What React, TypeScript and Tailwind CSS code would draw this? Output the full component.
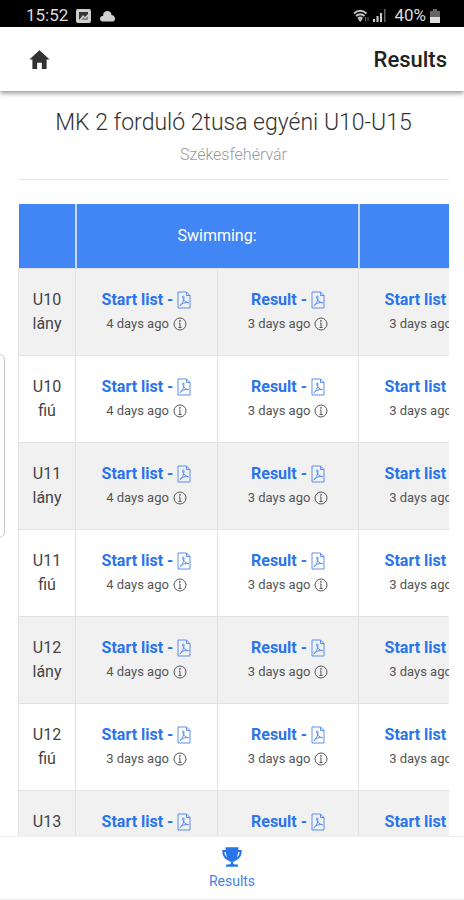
import React from 'react';
import { IoMdHome, IoMdTrophy } from 'react-icons/io';

interface AgeGroup {
  code: string;
  gender: string;
  startList: string;
  result: string;
}

const AGE_GROUPS: AgeGroup[] = [
  { code: 'U10', gender: 'lány', startList: '4 days ago', result: '3 days ago' },
  { code: 'U10', gender: 'fiú', startList: '4 days ago', result: '3 days ago' },
  { code: 'U11', gender: 'lány', startList: '4 days ago', result: '3 days ago' },
  { code: 'U11', gender: 'fiú', startList: '4 days ago', result: '3 days ago' },
  { code: 'U12', gender: 'lány', startList: '4 days ago', result: '3 days ago' },
  { code: 'U12', gender: 'fiú', startList: '3 days ago', result: '3 days ago' },
  { code: 'U13', gender: 'lány', startList: '3 days ago', result: '3 days ago' },
];

const PdfIcon = () => (
  <svg viewBox="0 0 14 18" className="h-[18px] w-[14px] shrink-0 text-[#5b8def]" fill="none" stroke="currentColor" strokeLinejoin="round">
    <path d="M1 1h8.500L13 4.500V17H1z" />
    <path d="M9.500 1v3.500H13" />
    <path d="M2.800 14.800c2-1 4.200-5 4.200-9 0-1.300-1.600-1.300-1.400 0 .4 3 2.900 5.700 6 5.900-3-.6-6.800.4-8.800 3.100z" />
  </svg>
);

const InfoIcon = () => (
  <svg viewBox="0 0 14 14" className="size-[14px] shrink-0" fill="none" stroke="currentColor">
    <circle cx="7" cy="7" r="6" />
    <path d="M6 6h1v4.500M5.500 10.500h3" />
    <circle cx="7" cy="3.800" r=".9" fill="currentColor" stroke="none" />
  </svg>
);

interface DocumentCellProps {
  label: string;
  uploaded: string;
}

const DocumentCell: React.FC<DocumentCellProps> = ({ label, uploaded }) => (
  <td className="border border-[#e0e2e4] p-0 text-center align-middle whitespace-nowrap">
    <a href="#" className="flex h-6 items-center justify-center gap-1 text-base font-bold text-[#2a74ec]">
      {label} - <PdfIcon />
    </a>
    <div className="flex h-6 items-center justify-center gap-1 text-[13px] text-[#555]">
      {uploaded} <InfoIcon />
    </div>
  </td>
);

const StatusBar = () => (
  <div className="flex h-[27px] shrink-0 items-center justify-between bg-black pt-1 pr-6 pl-[26px] text-[17px] text-[#dcdcdc]">
    <div className="flex items-center gap-2">
      <span>15:52</span>
      <svg viewBox="0 0 15 14" className="h-[14px] w-[15px]">
        <rect width="15" height="14" rx="2" fill="#cfcfcf" />
        <path d="M3 11V3h9v2L9 8 7 6 3 11z" fill="#333" />
        <path d="M5 11l2.500-3 2 1.500L12 7v4z" fill="#888" />
      </svg>
      <svg viewBox="0 0 17 12" className="h-3 w-[17px]" fill="#cfcfcf">
        <path d="M3 11.500a3 3 0 0 1-.3-5.600h1.500A4 4 0 0 1 8 1a4.300 4.300 0 0 1 4.500 4 3.400 3.400 0 0 1 1.500 6.500z" />
      </svg>
    </div>
    <div className="flex items-center gap-1">
      <svg viewBox="0 0 16 14" className="h-[14px] w-4" fill="none" stroke="#c4c4c4" strokeWidth="2">
        <path d="M1 4.500c4-3.500 8.500-3.500 12.500 0M3 7c2.700-2.300 5.800-2.300 8.500 0M5 9.500c1.500-1.200 3-1.200 4.500 0" />
        <path d="M7.200 13 5 10h4.500z" fill="#c4c4c4" stroke="none" />
        <path d="M12.500 12V8M15 8v4" stroke="#666" strokeWidth="1" />
      </svg>
      <svg viewBox="0 0 13 13" className="size-[13px]" fill="#cfcfcf">
        <path d="M0 10h2v3H0zM3.500 7h2v6h-2zM7 4h2v9H7z" />
        <path d="M11 0h1.500v13H11z" fill="#666" />
      </svg>
      <span className="ml-1">40%</span>
      <svg viewBox="0 0 10 14" className="h-[14px] w-[10px]">
        <path d="M3 0h4v2h3v6H0V2h3z" fill="#666" />
        <path d="M0 8h10v6H0z" fill="#dcdcdc" />
      </svg>
    </div>
  </div>
);

export default function App() {
  return (
    <div className="relative flex h-screen flex-col overflow-hidden bg-white font-['Roboto',sans-serif]">
      <StatusBar />

      {/* Header */}
      <header className="z-10 flex h-16 shrink-0 items-center justify-between bg-white pr-[17px] pl-[27px] shadow-[0_2px_5px_rgba(0,0,0,0.45)]">
        <button type="button" aria-label="Home" className="text-[#333]">
          <IoMdHome size={25} />
        </button>
        <h1 className="text-[22px] font-medium text-[#222]">Results</h1>
      </header>

      <main className="min-h-0 flex-1 overflow-hidden pr-[15px] pl-[18px]">
        <div className="border-b border-[#e6e6e6] pt-4 pb-2 text-center">
          <h2 className="text-[23px] leading-8 font-light text-[#333]">
            MK 2 forduló 2tusa egyéni U10-U15
          </h2>
          <p className="text-base leading-8 font-light text-[#999]">Székesfehérvár</p>
        </div>

        {/* Results table, scrolls sideways */}
        <div className="mt-6 overflow-x-auto [scrollbar-width:none]">
          <table className="w-[482px] table-fixed border-collapse">
            <colgroup>
              <col className="w-[57px]" />
              <col className="w-[142px]" />
              <col className="w-[141px]" />
              <col className="w-[142px]" />
            </colgroup>
            <thead>
              <tr className="h-16 bg-[#4285f4] text-base text-white">
                <th className="border-r-2 border-[#c3d9fb]"></th>
                <th colSpan={2} className="border-r-2 border-[#c3d9fb] font-normal">Swimming:</th>
                <th></th>
              </tr>
            </thead>
            <tbody>
              {AGE_GROUPS.map((group) => (
                <tr key={group.code + group.gender} className="h-[87px] odd:bg-[#f1f1f1]">
                  <th scope="row" className="border border-[#e0e2e4] text-base leading-6 font-normal text-[#444]">
                    {group.code}
                    <br />
                    {group.gender}
                  </th>
                  <DocumentCell label="Start list" uploaded={group.startList} />
                  <DocumentCell label="Result" uploaded={group.result} />
                  <DocumentCell label="Start list" uploaded="3 days ago" />
                </tr>
              ))}
            </tbody>
          </table>
        </div>
      </main>

      {/* Bottom tabs */}
      <nav className="flex h-16 shrink-0 justify-center border-y border-[#eee] bg-white">
        <a href="#" className="flex flex-col items-center pt-2 text-sm leading-6 text-[#4a80e8]">
          <IoMdTrophy size={24} className="text-[#2a74ec]" />
          Results
        </a>
      </nav>

      {/* Edge panel handle */}
      <div className="absolute top-[354px] -left-2 h-[184px] w-[13px] rounded-md border border-[#c8c8c8] bg-white" />
    </div>
  );
}
